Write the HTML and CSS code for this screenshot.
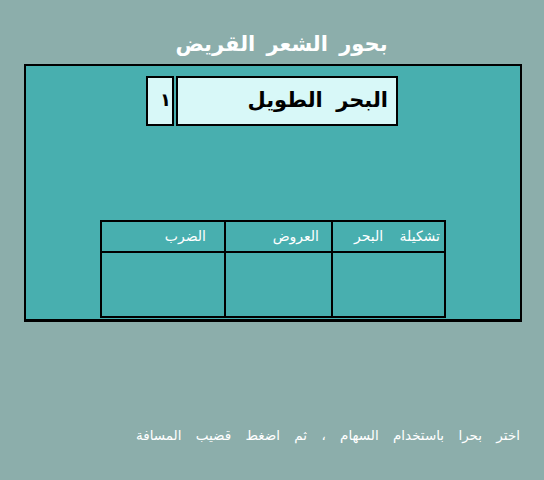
FILE: index.html
```html
<!DOCTYPE html>
<html lang="ar" dir="rtl">
<head>
<meta charset="utf-8">
<link rel="stylesheet" href="styles.css">
</head>
<body>
<div class="screen">
  <h1 class="title">بحور الشعر القريض</h1>
  <div class="panel">
    <div class="name-row">
      <div class="name-box">البحر الطويل</div>
      <div class="num-box">١</div>
    </div>
    <div class="table">
      <div class="cell head c1">تشكيلة البحر</div>
      <div class="cell head c2">العروض</div>
      <div class="cell head c3">الضرب</div>
      <div class="cell body c1"></div>
      <div class="cell body c2"></div>
      <div class="cell body c3"></div>
    </div>
  </div>
  <p class="hint">اختر بحرا باستخدام السهام ، ثم اضغط قضيب المسافة</p>
</div>
</body>
</html>
```

FILE: styles.css
```css
* { box-sizing: border-box; }
html, body {
  margin: 0;
  padding: 0;
  background: #8caeab;
}
.screen {
  width: 544px;
  height: 480px;
  font-family: "DejaVu Sans", sans-serif;
  direction: rtl;
  overflow: hidden;
}
.title {
  margin: 0;
  height: 64px;
  padding-top: 30px;
  padding-left: 19px;
  text-align: center;
  color: #ffffff;
  font-size: 21px;
  font-weight: bold;
  line-height: 28px;
  letter-spacing: 1px;
  word-spacing: 4px;
}
.panel {
  margin-right: 22px;
  width: 498px;
  height: 258px;
  background: #48afaf;
  border: 2px solid #000;
  border-bottom-width: 3px;
  padding-top: 10px;
}
.name-row {
  display: flex;
  gap: 2px;
  margin-right: 122px;
  height: 50px;
}
.name-box {
  width: 222px;
  height: 50px;
  background: #d8f8f8;
  border: 2px solid #000;
  color: #000;
  font-weight: bold;
  font-size: 21px;
  line-height: 44px;
  padding-right: 8px;
  word-spacing: 6px;
  letter-spacing: 1px;
}
.num-box {
  width: 28px;
  height: 50px;
  background: #d8f8f8;
  border: 2px solid #000;
  color: #000;
  font-weight: bold;
  font-size: 18px;
  line-height: 44px;
  padding-right: 1px;
}
.table {
  margin-top: 94px;
  margin-right: 74px;
  width: 346px;
  height: 98px;
  border: 2px solid #000;
  display: grid;
  grid-template-columns: 113px 107px 1fr;
  grid-template-rows: 31px 1fr;
}
.cell {
  border-left: 2px solid #000;
  color: #fff;
}
.cell.c3 { border-left: none; }
.head {
  border-bottom: 2px solid #000;
  font-size: 14px;
  line-height: 28px;
  padding-right: 4px;
  word-spacing: 12px;
  letter-spacing: 1.5px;
}
.head.c2 { padding-right: 12px; }
.head.c3 { padding-right: 18px; }
.hint {
  margin: 104px 24px 0 0;
  color: #fff;
  font-size: 13.5px;
  line-height: 18px;
  letter-spacing: 1.4px;
  word-spacing: 10px;
}
```
